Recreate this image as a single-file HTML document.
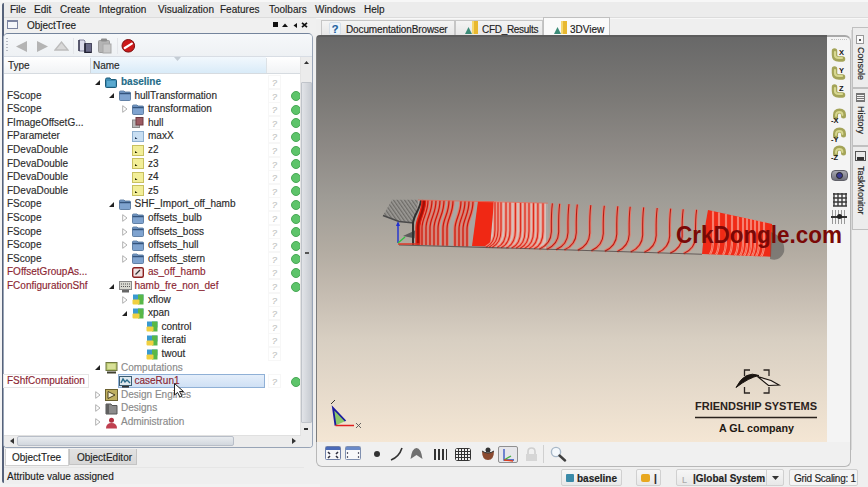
<!DOCTYPE html>
<html><head><meta charset="utf-8">
<style>
*{margin:0;padding:0;box-sizing:border-box}
html,body{width:868px;height:487px;overflow:hidden;background:#efefef;font-family:"Liberation Sans",sans-serif;font-size:10px;color:#222;-webkit-text-stroke:0.15px currentColor}
.a{position:absolute}
.mi{position:absolute;top:4px;font-size:10px;color:#1e1e1e;line-height:12px;white-space:nowrap}
/* left panel */
#lp{position:absolute;left:3px;top:33px;width:310px;height:415px;border:1px solid #98a4b6;border-top-color:#74849c;border-radius:5px 5px 4px 4px;box-shadow:inset 0 1px 0 #b4bfce;background:#fff;overflow:hidden}
#tb{position:absolute;left:0;top:0;width:309px;height:23px;background:linear-gradient(#f6f8fa,#eef1f4);border-bottom:1px solid #d8dde4}
#hdr{position:absolute;left:0;top:23px;width:298px;height:17px;background:linear-gradient(#ffffff,#f1f3f5);border-bottom:1px solid #d6dbe0}
#tree{position:absolute;left:0;top:0;width:868px;height:487px}
.tt{position:absolute;white-space:nowrap;line-height:14px;font-size:10px;color:#2a2a2a}
.tt.b{font-weight:bold;color:#246c88}
.tt.r{color:#8c2632}
.tt.g{color:#8a8a8a}
.ty{color:#2e2e2e}
.ic{position:absolute;line-height:0}
.ar{position:absolute;line-height:0}
.q{position:absolute;width:13px;height:14px;font-size:9px;line-height:14px;color:#c4c4c4;text-align:center;font-style:italic;border:1px solid #f7f7f7}
.dot{position:absolute;width:10px;height:10px;border-radius:5px;background:#5dc46a;border:1px solid #48a855}
.selbox{position:absolute;background:linear-gradient(#e4eefa,#cfe0f4);border:1px solid #8fb0d6}
.typebox{position:absolute;border:1px solid #e6e6e6;background:#fff}
/* right view */
#view{position:absolute;left:316px;top:35px;width:512px;height:407px;background:linear-gradient(#686868 0%,#7b7976 15%,#8e8a86 28%,#9f9c96 40%,#b3aca2 53%,#c6bdb2 64%,#d8cfc2 75%,#f4e6d4 100%);border-top:2px solid #5c5c5c;border-left:1px solid #7c7c7c;border-radius:4px 0 0 0}
#rtool{position:absolute;left:827px;top:35px;width:24px;height:407px;background:#f4f4f4;border-top:2px solid #a8a8a8;border-right:1px solid #b8b8b8;border-radius:0 6px 0 0}
#btool{position:absolute;left:316px;top:442px;width:535px;height:25px;background:#f0f0f0;border:1px solid #b8b8b8;border-top:none;border-radius:0 0 6px 6px}
.tab{position:absolute;height:16px;background:linear-gradient(#f4f4f4,#e6e6e6);border:1px solid #c6c6c6;border-bottom:none;font-size:10px;line-height:15px;color:#222;white-space:nowrap}
.stab{position:absolute;left:852px;width:16px;background:#ececec;border:1px solid #c0c0c0;border-right:none}
.vt{position:absolute;transform-origin:0 0;transform:rotate(90deg);white-space:nowrap;font-size:9px;line-height:11px;color:#222}
.sb{position:absolute;top:469px;height:17px;background:linear-gradient(#f6f6f6,#e8e8e8);border:1px solid #d0d0d0;border-radius:2px;font-size:10px;line-height:15px;white-space:nowrap}
</style></head><body>
<!-- window frame -->
<div class="a" style="left:0;top:0;width:868px;height:2px;background:#f7f7f7"></div>
<div class="a" style="left:0;top:0;width:2px;height:487px;background:#f4f4f4"></div>
<div class="a" style="left:2px;top:3px;width:2px;height:480px;background:#56627a;border-radius:3px 0 0 3px"></div>
<div class="a" style="left:0;top:484px;width:320px;height:3px;background:#f2f2f2"></div>

<!-- menu -->
<div class="a" style="left:4px;top:2px;width:864px;height:15px;background:#ececec"></div>
<div class="a" style="left:4px;top:17px;width:864px;height:1px;background:#dcdcdc"></div>
<div class="a" style="left:4px;top:18px;width:864px;height:1px;background:#f8f8f8"></div>
<div class="mi" style="left:10px">File</div>
<div class="mi" style="left:34px">Edit</div>
<div class="mi" style="left:60px">Create</div>
<div class="mi" style="left:99px">Integration</div>
<div class="mi" style="left:158px">Visualization</div>
<div class="mi" style="left:220px">Features</div>
<div class="mi" style="left:269px">Toolbars</div>
<div class="mi" style="left:315px">Windows</div>
<div class="mi" style="left:364px">Help</div>
<!-- ObjectTree title -->
<div class="a" style="left:4px;top:18px;width:312px;height:15px;background:#f0f0f0"></div>
<div class="a" style="left:7px;top:20px;width:11px;height:9px;border:1px solid #7c84a0;border-top-width:2px;background:#f4f6fa"></div>
<div class="mi" style="left:27px;top:20px">ObjectTree</div>
<div class="a" style="left:273px;top:22px;width:5px;height:5px;background:#111"></div>
<div class="a" style="left:282px;top:23px;line-height:0"><svg width="6" height="4"><path d="M0 4 L3 0.5 L6 4Z" fill="#111"/></svg></div>
<div class="a" style="left:292.5px;top:22.5px;line-height:0"><svg width="4" height="5"><path d="M4 0 V5 L0.5 2.5Z" fill="#111"/></svg></div>
<div class="a" style="left:301px;top:22px;line-height:0"><svg width="7" height="6"><path d="M1 0.8 L6 5.2 M6 0.8 L1 5.2" stroke="#111" stroke-width="1.7"/></svg></div>

<!-- left panel -->
<div id="lp">
 <div id="tb">
  <div class="a" style="left:2px;top:4px;width:2px;height:15px;background:repeating-linear-gradient(#b8bcc4 0 1px,transparent 1px 3px)"></div>
  <div class="a" style="left:12px;top:7px;line-height:0"><svg width="11" height="11"><path d="M11 0 V11 L0 5.5Z" fill="#b4b4b4"/></svg></div>
  <div class="a" style="left:33px;top:7px;line-height:0"><svg width="11" height="11"><path d="M0 0 V11 L11 5.5Z" fill="#b4b4b4"/></svg></div>
  <div class="a" style="left:50px;top:7px;line-height:0"><svg width="15" height="10"><path d="M1 9 L7.5 1 L14 9Z" fill="#d8d8d8" stroke="#bcbcbc" stroke-width="1.3"/></svg></div>
  <div class="a" style="left:69px;top:4px;width:1px;height:16px;background:#d6d9de"></div>
  <div class="a" style="left:74px;top:5px;line-height:0"><svg width="15" height="14"><path d="M1 1 H6 L7 2 V12 H1Z" fill="#dcdcec" stroke="#6a6a88" stroke-width="0.8"/><path d="M1 1 V12" stroke="#303048" stroke-width="1.4"/><rect x="7" y="4.5" width="6.5" height="9" fill="#6a6a88" stroke="#303048" stroke-width="0.8"/><path d="M7 4.5 V13.5 H13.5" stroke="#202030" stroke-width="1.5" fill="none"/></svg></div>
  <div class="a" style="left:69px;top:4px;width:1px;height:16px;background:#e4e6ea"></div>
  <div class="a" style="left:94px;top:4px;line-height:0"><svg width="14" height="16"><rect x="0.5" y="2.5" width="11" height="12" rx="1" fill="#b4b4b4" stroke="#9c9c9c"/><rect x="3" y="0.5" width="6" height="3" rx="1" fill="#8c8c8c"/><rect x="5" y="6" width="8" height="9" fill="#c8c8c8" stroke="#a8a8a8"/></svg></div>
  <div class="a" style="left:113px;top:4px;width:1px;height:16px;background:#e4e6ea"></div>
  <div class="a" style="left:117px;top:5px;line-height:0"><svg width="15" height="14"><circle cx="7.3" cy="6.8" r="6.3" fill="#cc1a1a" stroke="#7a1010" stroke-width="1"/><path d="M3.8 9 L10.8 4.6" stroke="#fff" stroke-width="2.3" stroke-linecap="round"/></svg></div>
 </div>
 <div id="hdr">
  <div class="a" style="left:86px;top:0;width:176px;height:16px;background:linear-gradient(#f2f8fd,#d9ebf8)"></div>
  <div class="a" style="left:86px;top:1px;width:1px;height:15px;background:#d0d6dc"></div>
  <div class="a" style="left:262px;top:1px;width:1px;height:15px;background:#dde2e6"></div>
  <div class="tt" style="left:4px;top:2px;line-height:13px">Type</div>
  <div class="tt" style="left:89px;top:2px;line-height:13px">Name</div>
  <div class="a" style="left:170px;top:0px;line-height:0"><svg width="7" height="4"><path d="M0 0 H7 L3.5 4Z" fill="#c4ccd4"/></svg></div>
 </div>
 <!-- vertical scrollbar -->
 <div class="a" style="left:296px;top:23px;width:12px;height:379px;background:#ececec;border-left:1px solid #e4e4e4"></div>
 <div class="a" style="left:300px;top:27px;line-height:0"><svg width="5" height="3"><path d="M0 3 L2.5 0 L5 3Z" fill="#333"/></svg></div>
 <div class="a" style="left:297px;top:48px;width:11px;height:341px;background:linear-gradient(90deg,#e2e4e8,#c8ccd2);border:1px solid #c0c4ca;border-radius:1px"><div class="a" style="left:3px;top:169px;width:4px;height:2px;background:#555"></div></div>
 <div class="a" style="left:300px;top:394px;width:4px;height:2px;background:#333"></div>
 <!-- horizontal scrollbar -->
 <div class="a" style="left:0;top:401px;width:309px;height:12px;background:#ececec;border-top:1px solid #e0e0e0"></div>
 <div class="a" style="left:6px;top:404px;line-height:0"><svg width="4" height="6"><path d="M4 0 V6 L0 3Z" fill="#333"/></svg></div>
 <div class="a" style="left:13px;top:402px;width:217px;height:10px;background:linear-gradient(#e8ebef,#d2d7de);border:1px solid #b8bec8;border-radius:2px"></div>
 <div class="a" style="left:288px;top:404px;line-height:0"><svg width="4" height="6"><path d="M0 0 V6 L4 3Z" fill="#333"/></svg></div>
 <div class="a" style="left:297px;top:401px;width:12px;height:12px;background:#ececec"></div>
</div>
<div id="tree" style="overflow:hidden;width:300px;height:436px">
<div class="ar" style="left:95.0px;top:79.5px"><svg width="5" height="5"><path d="M5 0 V5 H0Z" fill="#222"/></svg></div>
<div class="ic" style="left:105.0px;top:76.5px"><svg width="12" height="11" viewBox="0 0 12 11"><path d="M0.5 2.5 Q0.5 1 2 1 H5 L6 2.5 H10.5 Q11.5 2.5 11.5 3.5 V9.5 Q11.5 10.5 10.5 10.5 H1.5 Q0.5 10.5 0.5 9.5Z" fill="#3d8db5" stroke="#1d5a78" stroke-width="1"/><rect x="2" y="4" width="8.5" height="5.5" fill="#5aa9cf"/></svg></div>
<div class="tt b" style="left:121.0px;top:75.0px">baseline</div>
<div class="q" style="left:268px;top:75.0px">?</div>
<div class="ar" style="left:108.5px;top:93.1px"><svg width="5" height="5"><path d="M5 0 V5 H0Z" fill="#222"/></svg></div>
<div class="ic" style="left:118.5px;top:90.1px"><svg width="12" height="11" viewBox="0 0 12 11"><path d="M0.5 2 Q0.5 1 1.5 1 H5 L6 2 H10.5 Q11.5 2 11.5 3 V9.5 Q11.5 10.5 10.5 10.5 H1.5 Q0.5 10.5 0.5 9.5Z" fill="#7fa3cf" stroke="#4a6c96" stroke-width="0.8"/><path d="M0.6 3.5 H11.4" stroke="#34547c" stroke-width="1.5"/></svg></div>
<div class="tt " style="left:134.5px;top:88.6px">hullTransformation</div>
<div class="tt ty " style="left:7px;top:88.6px">FScope</div>
<div class="q" style="left:268px;top:88.6px">?</div>
<div class="dot" style="left:291px;top:91.1px"></div>
<div class="ar" style="left:122.0px;top:105.2px"><svg width="6" height="8"><path d="M0.7 0.7 L5 4 L0.7 7.3Z" fill="none" stroke="#b0b0b0" stroke-width="1"/></svg></div>
<div class="ic" style="left:132.0px;top:103.7px"><svg width="12" height="11" viewBox="0 0 12 11"><path d="M0.5 2 Q0.5 1 1.5 1 H5 L6 2 H10.5 Q11.5 2 11.5 3 V9.5 Q11.5 10.5 10.5 10.5 H1.5 Q0.5 10.5 0.5 9.5Z" fill="#7fa3cf" stroke="#4a6c96" stroke-width="0.8"/><path d="M0.6 3.5 H11.4" stroke="#34547c" stroke-width="1.5"/></svg></div>
<div class="tt " style="left:148.0px;top:102.2px">transformation</div>
<div class="tt ty " style="left:7px;top:102.2px">FScope</div>
<div class="q" style="left:268px;top:102.2px">?</div>
<div class="dot" style="left:291px;top:104.7px"></div>
<div class="ic" style="left:132.0px;top:117.3px"><svg width="12" height="11" viewBox="0 0 12 11"><rect x="0.5" y="3" width="7" height="7.5" fill="#b8b8b8" stroke="#8a8a8a"/><rect x="4" y="0.5" width="7" height="7.5" fill="#9c5a62" stroke="#6e3a40"/></svg></div>
<div class="tt " style="left:148.0px;top:115.8px">hull</div>
<div class="tt ty " style="left:7px;top:115.8px">FImageOffsetG...</div>
<div class="q" style="left:268px;top:115.8px">?</div>
<div class="dot" style="left:291px;top:118.3px"></div>
<div class="ic" style="left:132.0px;top:130.9px"><svg width="12" height="11" viewBox="0 0 12 11"><rect x="0.5" y="0.5" width="11" height="10" fill="#c8def2" stroke="#8fb0d0"/><path d="M3 6 L5.5 8 L3 8Z" fill="#1a3050"/></svg></div>
<div class="tt " style="left:148.0px;top:129.4px">maxX</div>
<div class="tt ty " style="left:7px;top:129.4px">FParameter</div>
<div class="q" style="left:268px;top:129.4px">?</div>
<div class="dot" style="left:291px;top:131.9px"></div>
<div class="ic" style="left:132.0px;top:144.5px"><svg width="12" height="11" viewBox="0 0 12 11"><rect x="0.5" y="0.5" width="11" height="10" fill="#f2ee98" stroke="#c8c060"/><path d="M3 6 L5.5 8 L3 8Z" fill="#202000"/></svg></div>
<div class="tt " style="left:148.0px;top:143.0px">z2</div>
<div class="tt ty " style="left:7px;top:143.0px">FDevaDouble</div>
<div class="q" style="left:268px;top:143.0px">?</div>
<div class="dot" style="left:291px;top:145.5px"></div>
<div class="ic" style="left:132.0px;top:158.1px"><svg width="12" height="11" viewBox="0 0 12 11"><rect x="0.5" y="0.5" width="11" height="10" fill="#f2ee98" stroke="#c8c060"/><path d="M3 6 L5.5 8 L3 8Z" fill="#202000"/></svg></div>
<div class="tt " style="left:148.0px;top:156.6px">z3</div>
<div class="tt ty " style="left:7px;top:156.6px">FDevaDouble</div>
<div class="q" style="left:268px;top:156.6px">?</div>
<div class="dot" style="left:291px;top:159.1px"></div>
<div class="ic" style="left:132.0px;top:171.7px"><svg width="12" height="11" viewBox="0 0 12 11"><rect x="0.5" y="0.5" width="11" height="10" fill="#f2ee98" stroke="#c8c060"/><path d="M3 6 L5.5 8 L3 8Z" fill="#202000"/></svg></div>
<div class="tt " style="left:148.0px;top:170.2px">z4</div>
<div class="tt ty " style="left:7px;top:170.2px">FDevaDouble</div>
<div class="q" style="left:268px;top:170.2px">?</div>
<div class="dot" style="left:291px;top:172.7px"></div>
<div class="ic" style="left:132.0px;top:185.3px"><svg width="12" height="11" viewBox="0 0 12 11"><rect x="0.5" y="0.5" width="11" height="10" fill="#f2ee98" stroke="#c8c060"/><path d="M3 6 L5.5 8 L3 8Z" fill="#202000"/></svg></div>
<div class="tt " style="left:148.0px;top:183.8px">z5</div>
<div class="tt ty " style="left:7px;top:183.8px">FDevaDouble</div>
<div class="q" style="left:268px;top:183.8px">?</div>
<div class="dot" style="left:291px;top:186.3px"></div>
<div class="ar" style="left:108.5px;top:201.9px"><svg width="5" height="5"><path d="M5 0 V5 H0Z" fill="#222"/></svg></div>
<div class="ic" style="left:118.5px;top:198.9px"><svg width="12" height="11" viewBox="0 0 12 11"><path d="M0.5 2 Q0.5 1 1.5 1 H5 L6 2 H10.5 Q11.5 2 11.5 3 V9.5 Q11.5 10.5 10.5 10.5 H1.5 Q0.5 10.5 0.5 9.5Z" fill="#7fa3cf" stroke="#4a6c96" stroke-width="0.8"/><path d="M0.6 3.5 H11.4" stroke="#34547c" stroke-width="1.5"/></svg></div>
<div class="tt " style="left:134.5px;top:197.4px">SHF_Import_off_hamb</div>
<div class="tt ty " style="left:7px;top:197.4px">FScope</div>
<div class="q" style="left:268px;top:197.4px">?</div>
<div class="dot" style="left:291px;top:199.9px"></div>
<div class="ar" style="left:122.0px;top:214.0px"><svg width="6" height="8"><path d="M0.7 0.7 L5 4 L0.7 7.3Z" fill="none" stroke="#b0b0b0" stroke-width="1"/></svg></div>
<div class="ic" style="left:132.0px;top:212.5px"><svg width="12" height="11" viewBox="0 0 12 11"><path d="M0.5 2 Q0.5 1 1.5 1 H5 L6 2 H10.5 Q11.5 2 11.5 3 V9.5 Q11.5 10.5 10.5 10.5 H1.5 Q0.5 10.5 0.5 9.5Z" fill="#7fa3cf" stroke="#4a6c96" stroke-width="0.8"/><path d="M0.6 3.5 H11.4" stroke="#34547c" stroke-width="1.5"/></svg></div>
<div class="tt " style="left:148.0px;top:211.0px">offsets_bulb</div>
<div class="tt ty " style="left:7px;top:211.0px">FScope</div>
<div class="q" style="left:268px;top:211.0px">?</div>
<div class="dot" style="left:291px;top:213.5px"></div>
<div class="ar" style="left:122.0px;top:227.6px"><svg width="6" height="8"><path d="M0.7 0.7 L5 4 L0.7 7.3Z" fill="none" stroke="#b0b0b0" stroke-width="1"/></svg></div>
<div class="ic" style="left:132.0px;top:226.1px"><svg width="12" height="11" viewBox="0 0 12 11"><path d="M0.5 2 Q0.5 1 1.5 1 H5 L6 2 H10.5 Q11.5 2 11.5 3 V9.5 Q11.5 10.5 10.5 10.5 H1.5 Q0.5 10.5 0.5 9.5Z" fill="#7fa3cf" stroke="#4a6c96" stroke-width="0.8"/><path d="M0.6 3.5 H11.4" stroke="#34547c" stroke-width="1.5"/></svg></div>
<div class="tt " style="left:148.0px;top:224.6px">offsets_boss</div>
<div class="tt ty " style="left:7px;top:224.6px">FScope</div>
<div class="q" style="left:268px;top:224.6px">?</div>
<div class="dot" style="left:291px;top:227.1px"></div>
<div class="ar" style="left:122.0px;top:241.2px"><svg width="6" height="8"><path d="M0.7 0.7 L5 4 L0.7 7.3Z" fill="none" stroke="#b0b0b0" stroke-width="1"/></svg></div>
<div class="ic" style="left:132.0px;top:239.7px"><svg width="12" height="11" viewBox="0 0 12 11"><path d="M0.5 2 Q0.5 1 1.5 1 H5 L6 2 H10.5 Q11.5 2 11.5 3 V9.5 Q11.5 10.5 10.5 10.5 H1.5 Q0.5 10.5 0.5 9.5Z" fill="#7fa3cf" stroke="#4a6c96" stroke-width="0.8"/><path d="M0.6 3.5 H11.4" stroke="#34547c" stroke-width="1.5"/></svg></div>
<div class="tt " style="left:148.0px;top:238.2px">offsets_hull</div>
<div class="tt ty " style="left:7px;top:238.2px">FScope</div>
<div class="q" style="left:268px;top:238.2px">?</div>
<div class="dot" style="left:291px;top:240.7px"></div>
<div class="ar" style="left:122.0px;top:254.8px"><svg width="6" height="8"><path d="M0.7 0.7 L5 4 L0.7 7.3Z" fill="none" stroke="#b0b0b0" stroke-width="1"/></svg></div>
<div class="ic" style="left:132.0px;top:253.3px"><svg width="12" height="11" viewBox="0 0 12 11"><path d="M0.5 2 Q0.5 1 1.5 1 H5 L6 2 H10.5 Q11.5 2 11.5 3 V9.5 Q11.5 10.5 10.5 10.5 H1.5 Q0.5 10.5 0.5 9.5Z" fill="#7fa3cf" stroke="#4a6c96" stroke-width="0.8"/><path d="M0.6 3.5 H11.4" stroke="#34547c" stroke-width="1.5"/></svg></div>
<div class="tt " style="left:148.0px;top:251.8px">offsets_stern</div>
<div class="tt ty " style="left:7px;top:251.8px">FScope</div>
<div class="q" style="left:268px;top:251.8px">?</div>
<div class="dot" style="left:291px;top:254.3px"></div>
<div class="ic" style="left:132.0px;top:266.9px"><svg width="12" height="11" viewBox="0 0 12 11"><rect x="0.7" y="0.7" width="10.6" height="9.6" rx="1.5" fill="#f0e0e0" stroke="#8b2020" stroke-width="1.4"/><path d="M3.5 7.5 L8 3" stroke="#333" stroke-width="1.3"/></svg></div>
<div class="tt r" style="left:148.0px;top:265.4px">as_off_hamb</div>
<div class="tt ty r" style="left:7px;top:265.4px">FOffsetGroupAs...</div>
<div class="q" style="left:268px;top:265.4px">?</div>
<div class="dot" style="left:291px;top:267.9px"></div>
<div class="ar" style="left:108.5px;top:283.5px"><svg width="5" height="5"><path d="M5 0 V5 H0Z" fill="#222"/></svg></div>
<div class="ic" style="left:118.5px;top:280.5px"><svg width="13" height="12" viewBox="0 0 13 12"><rect x="0.5" y="0.5" width="12" height="8" fill="#d8d8d0" stroke="#888"/><path d="M2 3 H11 M2 5.5 H11" stroke="#555" stroke-width="1" stroke-dasharray="1 1"/><rect x="3" y="9" width="7" height="2.5" fill="#666"/></svg></div>
<div class="tt r" style="left:134.5px;top:279.0px">hamb_fre_non_def</div>
<div class="tt ty r" style="left:7px;top:279.0px">FConfigurationShf</div>
<div class="q" style="left:268px;top:279.0px">?</div>
<div class="dot" style="left:291px;top:281.5px"></div>
<div class="ar" style="left:122.0px;top:295.6px"><svg width="6" height="8"><path d="M0.7 0.7 L5 4 L0.7 7.3Z" fill="none" stroke="#b0b0b0" stroke-width="1"/></svg></div>
<div class="ic" style="left:132.0px;top:294.1px"><svg width="12" height="11" viewBox="0 0 12 11"><rect x="1" y="0.5" width="10.5" height="6" fill="#3a9ad0"/><rect x="6" y="0.5" width="5.5" height="10" fill="#58b848"/><rect x="0.5" y="5.5" width="7" height="5" rx="1" fill="#f0d040"/></svg></div>
<div class="tt " style="left:148.0px;top:292.6px">xflow</div>
<div class="q" style="left:268px;top:292.6px">?</div>
<div class="ar" style="left:122.0px;top:310.7px"><svg width="5" height="5"><path d="M5 0 V5 H0Z" fill="#222"/></svg></div>
<div class="ic" style="left:132.0px;top:307.7px"><svg width="12" height="11" viewBox="0 0 12 11"><rect x="1" y="0.5" width="10.5" height="6" fill="#3a9ad0"/><rect x="6" y="0.5" width="5.5" height="10" fill="#58b848"/><rect x="0.5" y="5.5" width="7" height="5" rx="1" fill="#f0d040"/></svg></div>
<div class="tt " style="left:148.0px;top:306.2px">xpan</div>
<div class="q" style="left:268px;top:306.2px">?</div>
<div class="ic" style="left:145.5px;top:321.3px"><svg width="12" height="11" viewBox="0 0 12 11"><rect x="1" y="0.5" width="10.5" height="6" fill="#3a9ad0"/><rect x="6" y="0.5" width="5.5" height="10" fill="#58b848"/><rect x="0.5" y="5.5" width="7" height="5" rx="1" fill="#f0d040"/></svg></div>
<div class="tt " style="left:161.5px;top:319.8px">control</div>
<div class="q" style="left:268px;top:319.8px">?</div>
<div class="ic" style="left:145.5px;top:334.9px"><svg width="12" height="11" viewBox="0 0 12 11"><rect x="1" y="0.5" width="10.5" height="6" fill="#3a9ad0"/><rect x="6" y="0.5" width="5.5" height="10" fill="#58b848"/><rect x="0.5" y="5.5" width="7" height="5" rx="1" fill="#f0d040"/></svg></div>
<div class="tt " style="left:161.5px;top:333.4px">iterati</div>
<div class="q" style="left:268px;top:333.4px">?</div>
<div class="ic" style="left:145.5px;top:348.5px"><svg width="12" height="11" viewBox="0 0 12 11"><rect x="1" y="0.5" width="10.5" height="6" fill="#3a9ad0"/><rect x="6" y="0.5" width="5.5" height="10" fill="#58b848"/><rect x="0.5" y="5.5" width="7" height="5" rx="1" fill="#f0d040"/></svg></div>
<div class="tt " style="left:161.5px;top:347.0px">twout</div>
<div class="q" style="left:268px;top:347.0px">?</div>
<div class="ar" style="left:95.0px;top:365.1px"><svg width="5" height="5"><path d="M5 0 V5 H0Z" fill="#222"/></svg></div>
<div class="ic" style="left:105.0px;top:362.1px"><svg width="13" height="12" viewBox="0 0 13 12"><rect x="1" y="0.5" width="11" height="8" fill="#b8c870" stroke="#707840"/><rect x="2.5" y="2" width="8" height="5" fill="#d8e098"/><rect x="2" y="9.5" width="9" height="2" fill="#404030"/></svg></div>
<div class="tt g" style="left:121.0px;top:360.6px">Computations</div>
<div class="selbox" style="left:118px;top:373.7px;width:147px;height:14px"></div>
<div class="typebox" style="left:3px;top:373.7px;width:86px;height:14px"></div>
<div class="ic" style="left:118.5px;top:375.7px"><svg width="13" height="12" viewBox="0 0 13 12"><rect x="0.5" y="0.5" width="12" height="9" fill="#dfe8ee" stroke="#3c5c70"/><path d="M2 7 L4 3 L6 6 L8 4 L11 7" stroke="#2a6a8a" stroke-width="1.4" fill="none"/><rect x="3" y="10" width="7" height="1.6" fill="#333"/></svg></div>
<div class="tt r sel" style="left:134.5px;top:374.2px">caseRun1</div>
<div class="tt ty r box" style="left:7px;top:374.2px">FShfComputation</div>
<div class="q" style="left:268px;top:374.2px">?</div>
<div class="dot" style="left:291px;top:376.7px"></div>
<div class="ar" style="left:95.0px;top:390.8px"><svg width="6" height="8"><path d="M0.7 0.7 L5 4 L0.7 7.3Z" fill="none" stroke="#b0b0b0" stroke-width="1"/></svg></div>
<div class="ic" style="left:105.0px;top:389.3px"><svg width="13" height="12" viewBox="0 0 13 12"><rect x="0.5" y="0.5" width="12" height="11" fill="#c0b060" stroke="#6a6030"/><path d="M3 2.5 L10 6 L3 9.5Z" fill="#f6f0d0" stroke="#4a4020"/></svg></div>
<div class="tt g" style="left:121.0px;top:387.8px">Design Engines</div>
<div class="ar" style="left:95.0px;top:404.4px"><svg width="6" height="8"><path d="M0.7 0.7 L5 4 L0.7 7.3Z" fill="none" stroke="#b0b0b0" stroke-width="1"/></svg></div>
<div class="ic" style="left:105.0px;top:402.9px"><svg width="13" height="12" viewBox="0 0 13 12"><path d="M1 1 H6 L7 2.5 H12 V11 H1Z" fill="#8c8c8c" stroke="#555"/><rect x="1" y="1" width="3" height="10" fill="#606060"/></svg></div>
<div class="tt g" style="left:121.0px;top:401.4px">Designs</div>
<div class="ar" style="left:95.0px;top:418.0px"><svg width="6" height="8"><path d="M0.7 0.7 L5 4 L0.7 7.3Z" fill="none" stroke="#b0b0b0" stroke-width="1"/></svg></div>
<div class="ic" style="left:105.0px;top:416.5px"><svg width="13" height="12" viewBox="0 0 13 12"><circle cx="6.5" cy="3.2" r="2.5" fill="#b03040"/><path d="M1 11.5 Q1 6 6.5 6 Q12 6 12 11.5Z" fill="#c04050"/></svg></div>
<div class="tt g" style="left:121.0px;top:415.0px">Administration</div>
<!-- cursor -->
<div class="a" style="left:174px;top:383px;line-height:0"><svg width="11" height="15"><path d="M0.5 0.5 V12 L3.5 9.5 L6 14 L8 13 L5.5 8.5 H9.5Z" fill="#fff" stroke="#222" stroke-width="1"/></svg></div>
</div>
<!-- bottom tabs -->
<div class="a" style="left:5px;top:449px;width:64px;height:17px;background:#fff;border:1px solid #d0d0d0;border-top:none"></div>
<div class="mi" style="left:12px;top:452px">ObjectTree</div>
<div class="a" style="left:69px;top:449px;width:68px;height:16px;background:linear-gradient(#e2e2e2,#d8d8d8);border:1px solid #c4c4c4;border-top:none"></div>
<div class="mi" style="left:77px;top:452px">ObjectEditor</div>
<div class="a" style="left:4px;top:467px;width:300px;height:1px;background:#e6e6e6"></div>
<div class="mi" style="left:7px;top:471px">Attribute value assigned</div>

<!-- right tabs -->
<div class="tab" style="left:321px;top:20px;width:134px"><span class="a" style="left:7px;top:1px;width:12px;height:13px;background:#eef4fa;border:1px solid #d6e0ea;border-radius:2px;font-weight:bold;color:#2060a0;font-size:11px;line-height:12px;text-align:center">?</span><span class="a" style="left:24px;top:1px;letter-spacing:-0.12px">DocumentationBrowser</span></div>
<div class="tab" style="left:455px;top:20px;width:88px"><span class="a" style="left:9px;top:0px;line-height:0"><svg width="14" height="13"><path d="M0 13 L3.5 6 L7 13Z" fill="#3c8c78"/><rect x="7" y="0" width="6" height="13" fill="#e8b830"/><rect x="7" y="0" width="2" height="13" fill="#f6d870"/></svg></span><span class="a" style="left:26px;top:1px;letter-spacing:-0.3px">CFD_Results</span></div>
<div class="tab" style="left:543px;top:17px;width:67px;height:20px;background:#fafafa;border-color:#c0c0c0"><span class="a" style="left:10px;top:3px;line-height:0"><svg width="14" height="13"><path d="M0 13 L3.5 6 L7 13Z" fill="#3c8c78"/><rect x="7" y="0" width="6" height="13" fill="#e8b830"/><rect x="7" y="0" width="2" height="13" fill="#f6d870"/></svg></span><span class="a" style="left:26px;top:4px">3DView</span></div>

<!-- 3D view -->
<div id="view">
 
</div>
<div id="rtool">
 <div class="a" style="left:4px;top:2px;width:16px;height:1px;border-top:1px dotted #c0c0c0"></div>
 <div class="a" style="left:3px;top:9px;line-height:0"><svg width="22" height="18"><path d="M4.5 5 V9 Q4.5 13 9 13 H12.5" stroke="#a4a458" stroke-width="5.5" fill="none" stroke-linecap="round"/><path d="M5 6 V9 Q5 12 9 12 H12" stroke="#d8d890" stroke-width="2.2" fill="none" stroke-linecap="round"/><text x="9" y="8.5" font-family="Liberation Sans" font-weight="bold" font-size="7.5" fill="#151515">X</text></svg></div>
<div class="a" style="left:3px;top:27px;line-height:0"><svg width="22" height="18"><path d="M4.5 5 V9 Q4.5 13 9 13 H12.5" stroke="#a4a458" stroke-width="5.5" fill="none" stroke-linecap="round"/><path d="M5 6 V9 Q5 12 9 12 H12" stroke="#d8d890" stroke-width="2.2" fill="none" stroke-linecap="round"/><text x="9" y="8.5" font-family="Liberation Sans" font-weight="bold" font-size="7.5" fill="#151515">Y</text></svg></div>
<div class="a" style="left:3px;top:45px;line-height:0"><svg width="22" height="18"><path d="M4.5 5 V9 Q4.5 13 9 13 H12.5" stroke="#a4a458" stroke-width="5.5" fill="none" stroke-linecap="round"/><path d="M5 6 V9 Q5 12 9 12 H12" stroke="#d8d890" stroke-width="2.2" fill="none" stroke-linecap="round"/><text x="9" y="8.5" font-family="Liberation Sans" font-weight="bold" font-size="7.5" fill="#151515">Z</text></svg></div>
<div class="a" style="left:2px;top:70px;line-height:0"><svg width="22" height="20"><path d="M6.5 10 V8 Q6.5 4 10.5 4 Q14.5 4 14.5 8 V9" stroke="#a4a458" stroke-width="5" fill="none" stroke-linecap="round"/><path d="M7 9 V8 Q7 5 10.5 5 Q13.5 5 13.5 8" stroke="#d8d890" stroke-width="1.8" fill="none" stroke-linecap="round"/><text x="2" y="16" font-family="Liberation Sans" font-weight="bold" font-size="7.5" fill="#151515">-X</text></svg></div>
<div class="a" style="left:2px;top:89px;line-height:0"><svg width="22" height="20"><path d="M6.5 10 V8 Q6.5 4 10.5 4 Q14.5 4 14.5 8 V9" stroke="#a4a458" stroke-width="5" fill="none" stroke-linecap="round"/><path d="M7 9 V8 Q7 5 10.5 5 Q13.5 5 13.5 8" stroke="#d8d890" stroke-width="1.8" fill="none" stroke-linecap="round"/><text x="2" y="16" font-family="Liberation Sans" font-weight="bold" font-size="7.5" fill="#151515">-Y</text></svg></div>
<div class="a" style="left:2px;top:107px;line-height:0"><svg width="22" height="20"><path d="M6.5 10 V8 Q6.5 4 10.5 4 Q14.5 4 14.5 8 V9" stroke="#a4a458" stroke-width="5" fill="none" stroke-linecap="round"/><path d="M7 9 V8 Q7 5 10.5 5 Q13.5 5 13.5 8" stroke="#d8d890" stroke-width="1.8" fill="none" stroke-linecap="round"/><text x="2" y="16" font-family="Liberation Sans" font-weight="bold" font-size="7.5" fill="#151515">-Z</text></svg></div>
<div class="a" style="left:4px;top:133px;width:17px;height:11px;border-radius:4px;background:linear-gradient(#a8a8b0,#70707c);border:1px solid #606068"><div class="a" style="left:4px;top:1px;width:7px;height:7px;border-radius:4px;background:#3a3a90;border:1px solid #222"></div></div>
<div class="a" style="left:5px;top:155px;line-height:0"><svg width="15" height="15"><path d="M2 1 V14 M6 1 V14 M10 1 V14 M14 1 V14 M1 2 H15 M1 6 H15 M1 10 H15 M1 14 H15" stroke="#3a3a3a" stroke-width="1.4"/></svg></div>
<div class="a" style="left:5px;top:173px;width:15px;height:14px;background:repeating-linear-gradient(90deg,#999 0 1px,transparent 1px 3px)"></div><div class="a" style="left:4px;top:179px;width:16px;height:1.5px;background:#333"></div><div class="a" style="left:10px;top:177px;width:5px;height:5px;border-radius:3px;background:#222"></div>
</div>
<div id="btool">
 <div class="a" style="left:8px;top:4px;line-height:0"><svg width="16" height="14"><rect x="0.5" y="0.5" width="15" height="13" rx="1" fill="#f8f8fa" stroke="#7080a8"/><rect x="1" y="1" width="14" height="3" fill="#4a6ab8"/><path d="M3 6 L5 8 M13 6 L11 8 M3 12 L5 10 M13 12 L11 10" stroke="#303040" stroke-width="1.6"/></svg></div>
<div class="a" style="left:28px;top:4px;line-height:0"><svg width="16" height="14"><rect x="0.5" y="0.5" width="15" height="13" rx="1" fill="#f8f8fa" stroke="#8090b0"/><rect x="1" y="1" width="14" height="3" fill="#6a8ac8"/><path d="M2.5 6 V8 M13.5 6 V8 M2.5 10 V12 M13.5 10 V12" stroke="#606070" stroke-width="1.2"/></svg></div>
<div class="a" style="left:56.5px;top:9px;width:6px;height:6px;border-radius:3px;background:#333"></div>
<div class="a" style="left:73px;top:5px;line-height:0"><svg width="14" height="14"><path d="M1 13 Q9 10 12 1" stroke="#333" stroke-width="1.6" fill="none"/></svg></div>
<div class="a" style="left:93px;top:5px;line-height:0"><svg width="13" height="13"><path d="M0.5 12 Q2 1 6.5 1 Q11 1 12.5 12 L6.5 8Z" fill="#707070"/></svg></div>
<div class="a" style="left:117px;top:7px;width:13px;height:11px;background:repeating-linear-gradient(90deg,#333 0 2px,transparent 2px 4px)"></div>
<div class="a" style="left:138px;top:6px;width:16px;height:13px;background:repeating-linear-gradient(90deg,#333 0 1.5px,transparent 1.5px 3px),repeating-linear-gradient(#333 0 1px,transparent 1px 3px);border-radius:3px"></div>
<div class="a" style="left:164px;top:5px;line-height:0"><svg width="14" height="14"><path d="M1 4 Q1 13 7 13 Q13 13 13 4Z" fill="#8a4a30"/><path d="M1 4 Q7 8 13 4" fill="#fff" stroke="#333"/><ellipse cx="7" cy="3" rx="2.5" ry="2.5" fill="#333"/></svg></div>
<div class="a" style="left:181px;top:4px;width:20px;height:17px;border:1px solid #909090;background:#e6e6ea;border-radius:2px"><svg class="a" style="left:2px;top:1px" width="14" height="14"><path d="M3 1 V12 H13" stroke="#3050c0" stroke-width="1.3" fill="none"/><path d="M3 12 L10 8" stroke="#40b040" stroke-width="1.3"/><path d="M3 12 L12 13" stroke="#e04020" stroke-width="1.3"/></svg></div>
<div class="a" style="left:208px;top:5px;line-height:0"><svg width="13" height="14"><path d="M3 7 V4.5 Q3 1 6.5 1 Q10 1 10 4.5 V7" stroke="#cfcfcf" stroke-width="1.6" fill="none"/><rect x="1" y="7" width="11" height="7" fill="#d6d6d6"/></svg></div>
<div class="a" style="left:226px;top:3px;width:1px;height:18px;background:#d0d0d0"></div>
<div class="a" style="left:233px;top:4px;line-height:0"><svg width="17" height="16"><circle cx="6" cy="6" r="4.6" fill="#f4f8fc" stroke="#a8b8c8" stroke-width="1.4"/><path d="M9.5 9.5 L15 14.5" stroke="#404040" stroke-width="2.4" stroke-linecap="round"/></svg></div>
</div>
<!-- side tabs -->
<div class="a" style="left:851px;top:30px;width:1px;height:420px;background:#d8d8d8"></div>
<div class="stab" style="top:27px;height:61px"><div class="a" style="left:3px;top:7px;width:8px;height:9px;border:1px solid #999;background:#fafafa"><div class="a" style="left:2px;top:3px;width:2px;height:2px;background:#555"></div></div><div class="vt" style="left:13px;top:19px">Console</div></div>
<div class="stab" style="top:88px;height:58px"><div class="a" style="left:3px;top:4px;width:9px;height:9px;background:repeating-linear-gradient(#777 0 1px,#f4f4f4 1px 2px);border:1px solid #777"></div><div class="vt" style="left:13px;top:17px">History</div></div>
<div class="stab" style="top:146px;height:84px"><div class="a" style="left:2px;top:4px;width:11px;height:10px;border:1px solid #555;background:#e8e8e8"><div class="a" style="left:1px;top:5px;width:7px;height:3px;background:#333"></div></div><div class="vt" style="left:13px;top:19px">TaskMonitor</div></div>
<!-- status bar right -->
<div class="sb" style="left:561px;width:61px"><span class="a" style="left:4px;top:4px;width:8px;height:8px;background:#3a8aa8;border-radius:1px"></span><span class="a" style="left:15px;top:1px;font-weight:bold;color:#222">baseline</span></div>
<div class="sb" style="left:636px;width:25px"><span class="a" style="left:4px;top:4px;width:9px;height:8px;background:#e8a820;border-radius:2px"></span><span class="a" style="left:17px;top:1px;font-weight:bold">|</span></div>
<div class="sb" style="left:676px;width:108px"><span class="a" style="left:5px;top:3px;color:#aaa;font-size:9px">L</span><span class="a" style="left:16px;top:1px;font-weight:bold;color:#222">|Global System</span><span class="a" style="left:89px;top:0;width:18px;height:15px;border-left:1px solid #d0d0d0"></span><span class="a" style="left:95px;top:6px;line-height:0"><svg width="7" height="4"><path d="M0 0 H7 L3.5 4Z" fill="#333"/></svg></span></div>
<div class="sb" style="left:789px;width:69px;background:#f4f4f4"><span class="a" style="left:4px;top:1px;letter-spacing:-0.25px">Grid Scaling: 1</span></div>
<svg class="a" style="left:0;top:0" width="868" height="487" viewBox="0 0 868 487">
<defs><pattern id="hat" width="3" height="3" patternUnits="userSpaceOnUse" patternTransform="rotate(-35)"><rect width="3" height="3" fill="#9c9a96"/><rect width="1.3" height="3" fill="#6e6c68"/></pattern></defs>
<path d="M383 215.5 L392 199.8 L424 199.8 Q417 209 414 223 L399 221 Z" fill="url(#hat)"/>
<path d="M383 215.5 L399 221.5 L414 223" stroke="#4a4a4a" stroke-width="1.6" fill="none"/>
<path d="M403 236 L416 230 L418 239 Z" fill="#5a5a5a"/>
<path d="M418 200 L548 203.2 L548 249 L414 244.7 Z" fill="#aaa6a2"/>
<path d="M494 201.5 L546 203.2 L546 249 L490 247.5 Z" fill="#d8c0ba"/>
<path d="M478 201 L494 201.5 L490 246.5 L472 246 Z" fill="#f02814"/>
<path d="M708 210 L772 224 L771 256.7 L702 254 Q704 230 708 210 Z" fill="#f02a16"/>
<path d="M771 232 Q786 238 784 252 Q780 262 770 259 Z" fill="#5a5856" opacity="0.6"/>
<path d="M421 200 C420 210 414 214 413 223 L413 245" stroke="#303030" stroke-width="2" fill="none"/>
<path d="M424.0 199.9 C424.0 213.4 418.0 217.9 418.0 227.8 L418.0 244.8" fill="none" stroke="#e82010" stroke-width="5.2"/><path d="M424.0 199.9 C424.0 213.4 418.0 217.9 418.0 227.8 L418.0 244.8" fill="none" stroke="#a01008" stroke-width="2.4"/>
<path d="M428.0 200.0 C428.0 213.5 422.0 218.0 422.0 227.9 L422.0 245.0" fill="none" stroke="#f07060" stroke-width="3.2"/><path d="M428.0 200.0 C428.0 213.5 422.0 218.0 422.0 227.9 L422.0 245.0" fill="none" stroke="#c01c10" stroke-width="1.2"/>
<path d="M432.0 200.1 C432.0 213.6 426.0 218.1 426.0 228.0 L426.0 245.1" fill="none" stroke="#f07060" stroke-width="3.2"/><path d="M432.0 200.1 C432.0 213.6 426.0 218.1 426.0 228.0 L426.0 245.1" fill="none" stroke="#c01c10" stroke-width="1.2"/>
<path d="M436.0 200.2 C436.0 213.7 430.0 218.2 430.0 228.1 L430.0 245.2" fill="none" stroke="#f07060" stroke-width="3.2"/><path d="M436.0 200.2 C436.0 213.7 430.0 218.2 430.0 228.1 L430.0 245.2" fill="none" stroke="#c01c10" stroke-width="1.2"/>
<path d="M440.0 200.3 C440.0 213.8 434.0 218.3 434.0 228.3 L434.0 245.4" fill="none" stroke="#f07060" stroke-width="3.2"/><path d="M440.0 200.3 C440.0 213.8 434.0 218.3 434.0 228.3 L434.0 245.4" fill="none" stroke="#c01c10" stroke-width="1.2"/>
<path d="M444.0 200.4 C444.0 214.0 438.0 218.5 438.0 228.4 L438.0 245.5" fill="none" stroke="#f07060" stroke-width="3.2"/><path d="M444.0 200.4 C444.0 214.0 438.0 218.5 438.0 228.4 L438.0 245.5" fill="none" stroke="#c01c10" stroke-width="1.2"/>
<path d="M449.0 200.6 C449.0 214.1 443.0 218.6 443.0 228.5 L443.0 245.7" fill="none" stroke="#f07060" stroke-width="3.2"/><path d="M449.0 200.6 C449.0 214.1 443.0 218.6 443.0 228.5 L443.0 245.7" fill="none" stroke="#c01c10" stroke-width="1.2"/>
<path d="M453.0 200.7 C453.0 214.2 447.0 218.7 447.0 228.7 L447.0 245.8" fill="none" stroke="#f07060" stroke-width="3.2"/><path d="M453.0 200.7 C453.0 214.2 447.0 218.7 447.0 228.7 L447.0 245.8" fill="none" stroke="#c01c10" stroke-width="1.2"/>
<path d="M461.0 200.9 C461.0 214.4 455.0 219.0 455.0 228.9 L455.0 246.1" fill="none" stroke="#f07060" stroke-width="3.2"/><path d="M461.0 200.9 C461.0 214.4 455.0 219.0 455.0 228.9 L455.0 246.1" fill="none" stroke="#c01c10" stroke-width="1.2"/>
<path d="M465.0 201.0 C465.0 214.6 459.0 219.1 459.0 229.0 L459.0 246.2" fill="none" stroke="#f07060" stroke-width="3.2"/><path d="M465.0 201.0 C465.0 214.6 459.0 219.1 459.0 229.0 L459.0 246.2" fill="none" stroke="#c01c10" stroke-width="1.2"/>
<path d="M469.0 201.1 C469.0 214.7 463.0 219.2 463.0 229.2 L463.0 246.3" fill="none" stroke="#f07060" stroke-width="3.2"/><path d="M469.0 201.1 C469.0 214.7 463.0 219.2 463.0 229.2 L463.0 246.3" fill="none" stroke="#c01c10" stroke-width="1.2"/>
<path d="M473.0 201.2 C473.0 214.8 467.0 219.3 467.0 229.3 L467.0 246.5" fill="none" stroke="#f07060" stroke-width="3.2"/><path d="M473.0 201.2 C473.0 214.8 467.0 219.3 467.0 229.3 L467.0 246.5" fill="none" stroke="#c01c10" stroke-width="1.2"/>
<path d="M495.0 201.8 L495.0 230.0 Q495.0 243.2 486.0 247.2" fill="none" stroke="#f08a7a" stroke-width="3.0"/><path d="M495.0 201.8 L495.0 230.0 Q495.0 243.2 486.0 247.2" fill="none" stroke="#d8281a" stroke-width="1.08"/>
<path d="M498.0 201.9 L498.0 230.0 Q498.0 243.3 489.0 247.3" fill="none" stroke="#f08a7a" stroke-width="3.0"/><path d="M498.0 201.9 L498.0 230.0 Q498.0 243.3 489.0 247.3" fill="none" stroke="#d8281a" stroke-width="1.08"/>
<path d="M501.0 202.0 L501.0 230.1 Q501.0 243.4 492.0 247.4" fill="none" stroke="#f08a7a" stroke-width="3.0"/><path d="M501.0 202.0 L501.0 230.1 Q501.0 243.4 492.0 247.4" fill="none" stroke="#d8281a" stroke-width="1.08"/>
<path d="M506.0 202.1 L506.0 230.3 Q506.0 243.6 497.0 247.6" fill="none" stroke="#f08a7a" stroke-width="3.0"/><path d="M506.0 202.1 L506.0 230.3 Q506.0 243.6 497.0 247.6" fill="none" stroke="#d8281a" stroke-width="1.08"/>
<path d="M510.0 202.2 L510.0 230.4 Q510.0 243.7 501.0 247.7" fill="none" stroke="#f08a7a" stroke-width="3.0"/><path d="M510.0 202.2 L510.0 230.4 Q510.0 243.7 501.0 247.7" fill="none" stroke="#d8281a" stroke-width="1.08"/>
<path d="M515.4 202.3 L515.4 230.6 Q515.4 243.9 506.4 247.9" fill="none" stroke="#f08a7a" stroke-width="3.0"/><path d="M515.4 202.3 L515.4 230.6 Q515.4 243.9 506.4 247.9" fill="none" stroke="#d8281a" stroke-width="1.08"/>
<path d="M520.6 202.5 L520.6 230.7 Q520.6 244.1 511.6 248.1" fill="none" stroke="#f08a7a" stroke-width="3.0"/><path d="M520.6 202.5 L520.6 230.7 Q520.6 244.1 511.6 248.1" fill="none" stroke="#d8281a" stroke-width="1.08"/>
<path d="M525.0 202.6 L525.0 230.9 Q525.0 244.2 516.0 248.2" fill="none" stroke="#f08a7a" stroke-width="3.0"/><path d="M525.0 202.6 L525.0 230.9 Q525.0 244.2 516.0 248.2" fill="none" stroke="#d8281a" stroke-width="1.08"/>
<path d="M529.0 202.7 L529.0 231.0 Q529.0 244.4 520.0 248.4" fill="none" stroke="#f08a7a" stroke-width="3.0"/><path d="M529.0 202.7 L529.0 231.0 Q529.0 244.4 520.0 248.4" fill="none" stroke="#d8281a" stroke-width="1.08"/>
<path d="M533.5 202.8 L533.5 231.1 Q533.5 244.5 524.5 248.5" fill="none" stroke="#f08a7a" stroke-width="3.0"/><path d="M533.5 202.8 L533.5 231.1 Q533.5 244.5 524.5 248.5" fill="none" stroke="#d8281a" stroke-width="1.08"/>
<path d="M537.9 202.9 L537.9 231.3 Q537.9 244.7 528.9 248.7" fill="none" stroke="#f08a7a" stroke-width="3.0"/><path d="M537.9 202.9 L537.9 231.3 Q537.9 244.7 528.9 248.7" fill="none" stroke="#d8281a" stroke-width="1.08"/>
<path d="M543.0 203.1 L543.0 231.4 Q543.0 244.8 534.0 248.8" fill="none" stroke="#f08a7a" stroke-width="3.0"/><path d="M543.0 203.1 L543.0 231.4 Q543.0 244.8 534.0 248.8" fill="none" stroke="#d8281a" stroke-width="1.08"/>
<path d="M552.4 203.4 C550.9 214.8 551.4 226.3 551.4 231.8 Q550.9 244.1 539.4 249.1" fill="none" stroke="#ea7868" stroke-width="2.9"/><path d="M552.4 203.4 C550.9 214.8 551.4 226.3 551.4 231.8 Q550.9 244.1 539.4 249.1" fill="none" stroke="#b01c14" stroke-width="1.02"/>
<path d="M559.7 203.7 C558.2 215.1 558.7 226.5 558.7 232.0 Q558.2 244.4 546.7 249.4" fill="none" stroke="#ea7868" stroke-width="2.9"/><path d="M559.7 203.7 C558.2 215.1 558.7 226.5 558.7 232.0 Q558.2 244.4 546.7 249.4" fill="none" stroke="#b01c14" stroke-width="1.02"/>
<path d="M569.0 204.1 C567.5 215.5 568.0 226.9 568.0 232.4 Q567.5 244.7 556.0 249.7" fill="none" stroke="#ea7868" stroke-width="2.9"/><path d="M569.0 204.1 C567.5 215.5 568.0 226.9 568.0 232.4 Q567.5 244.7 556.0 249.7" fill="none" stroke="#b01c14" stroke-width="1.02"/>
<path d="M577.3 204.5 C575.8 215.9 576.3 227.2 576.3 232.7 Q575.8 244.9 564.3 249.9" fill="none" stroke="#ea7868" stroke-width="2.9"/><path d="M577.3 204.5 C575.8 215.9 576.3 227.2 576.3 232.7 Q575.8 244.9 564.3 249.9" fill="none" stroke="#b01c14" stroke-width="1.02"/>
<path d="M590.8 205.1 C589.3 216.4 589.8 227.7 589.8 233.1 Q589.3 245.3 577.8 250.3" fill="none" stroke="#ea7868" stroke-width="2.9"/><path d="M590.8 205.1 C589.3 216.4 589.8 227.7 589.8 233.1 Q589.3 245.3 577.8 250.3" fill="none" stroke="#b01c14" stroke-width="1.02"/>
<path d="M604.3 205.7 C602.8 217.0 603.3 228.2 603.3 233.6 Q602.8 245.8 591.3 250.8" fill="none" stroke="#ea7868" stroke-width="2.9"/><path d="M604.3 205.7 C602.8 217.0 603.3 228.2 603.3 233.6 Q602.8 245.8 591.3 250.8" fill="none" stroke="#b01c14" stroke-width="1.02"/>
<path d="M617.8 206.3 C616.3 217.5 616.8 228.7 616.8 234.1 Q616.3 246.2 604.8 251.2" fill="none" stroke="#ea7868" stroke-width="2.9"/><path d="M617.8 206.3 C616.3 217.5 616.8 228.7 616.8 234.1 Q616.3 246.2 604.8 251.2" fill="none" stroke="#b01c14" stroke-width="1.02"/>
<path d="M630.2 206.8 C628.7 218.0 629.2 229.2 629.2 234.6 Q628.7 246.6 617.2 251.6" fill="none" stroke="#ea7868" stroke-width="2.9"/><path d="M630.2 206.8 C628.7 218.0 629.2 229.2 629.2 234.6 Q628.7 246.6 617.2 251.6" fill="none" stroke="#b01c14" stroke-width="1.02"/>
<path d="M643.7 207.4 C642.2 218.6 642.7 229.7 642.7 235.1 Q642.2 247.0 630.7 252.0" fill="none" stroke="#ea7868" stroke-width="2.9"/><path d="M643.7 207.4 C642.2 218.6 642.7 229.7 642.7 235.1 Q642.2 247.0 630.7 252.0" fill="none" stroke="#b01c14" stroke-width="1.02"/>
<path d="M657.2 208.0 C655.7 219.1 656.2 230.2 656.2 235.6 Q655.7 247.4 644.2 252.4" fill="none" stroke="#ea7868" stroke-width="2.9"/><path d="M657.2 208.0 C655.7 219.1 656.2 230.2 656.2 235.6 Q655.7 247.4 644.2 252.4" fill="none" stroke="#b01c14" stroke-width="1.02"/>
<path d="M670.7 208.6 C669.2 219.7 669.7 230.7 669.7 236.0 Q669.2 247.8 657.7 252.8" fill="none" stroke="#ea7868" stroke-width="2.9"/><path d="M670.7 208.6 C669.2 219.7 669.7 230.7 669.7 236.0 Q669.2 247.8 657.7 252.8" fill="none" stroke="#b01c14" stroke-width="1.02"/>
<path d="M683.2 209.2 C681.7 220.2 682.2 231.2 682.2 236.5 Q681.7 248.2 670.2 253.2" fill="none" stroke="#ea7868" stroke-width="2.9"/><path d="M683.2 209.2 C681.7 220.2 682.2 231.2 682.2 236.5 Q681.7 248.2 670.2 253.2" fill="none" stroke="#b01c14" stroke-width="1.02"/>
<path d="M696.6 209.8 C695.1 220.8 695.6 231.7 695.6 237.0 Q695.1 248.6 683.6 253.6" fill="none" stroke="#ea7868" stroke-width="2.9"/><path d="M696.6 209.8 C695.1 220.8 695.6 231.7 695.6 237.0 Q695.1 248.6 683.6 253.6" fill="none" stroke="#b01c14" stroke-width="1.02"/>
<path d="M713.0 211.3 L713.0 237.9 Q713.0 250.2 710.0 254.2" fill="none" stroke="#f8a090" stroke-width="2.1"/><path d="M713.0 211.3 L713.0 237.9 Q713.0 250.2 710.0 254.2" fill="none" stroke="#f02a16" stroke-width="0.54"/>
<path d="M719.0 212.6 L719.0 238.5 Q719.0 250.5 716.0 254.5" fill="none" stroke="#f8a090" stroke-width="2.1"/><path d="M719.0 212.6 L719.0 238.5 Q719.0 250.5 716.0 254.5" fill="none" stroke="#f02a16" stroke-width="0.54"/>
<path d="M726.0 214.0 L726.0 239.3 Q726.0 250.8 723.0 254.8" fill="none" stroke="#f8a090" stroke-width="2.1"/><path d="M726.0 214.0 L726.0 239.3 Q726.0 250.8 723.0 254.8" fill="none" stroke="#f02a16" stroke-width="0.54"/>
<path d="M732.0 215.2 L732.0 239.9 Q732.0 251.0 729.0 255.0" fill="none" stroke="#f8a090" stroke-width="2.1"/><path d="M732.0 215.2 L732.0 239.9 Q732.0 251.0 729.0 255.0" fill="none" stroke="#f02a16" stroke-width="0.54"/>
<path d="M738.0 216.4 L738.0 240.5 Q738.0 251.3 735.0 255.3" fill="none" stroke="#f8a090" stroke-width="2.1"/><path d="M738.0 216.4 L738.0 240.5 Q738.0 251.3 735.0 255.3" fill="none" stroke="#f02a16" stroke-width="0.54"/>
<path d="M743.0 217.5 L743.0 241.0 Q743.0 251.5 740.0 255.5" fill="none" stroke="#f8a090" stroke-width="2.1"/><path d="M743.0 217.5 L743.0 241.0 Q743.0 251.5 740.0 255.5" fill="none" stroke="#f02a16" stroke-width="0.54"/>
<path d="M747.0 218.3 L747.0 241.4 Q747.0 251.6 744.0 255.6" fill="none" stroke="#f8a090" stroke-width="2.1"/><path d="M747.0 218.3 L747.0 241.4 Q747.0 251.6 744.0 255.6" fill="none" stroke="#f02a16" stroke-width="0.54"/>
<path d="M751.0 219.1 L751.0 241.9 Q751.0 251.8 748.0 255.8" fill="none" stroke="#f8a090" stroke-width="2.1"/><path d="M751.0 219.1 L751.0 241.9 Q751.0 251.8 748.0 255.8" fill="none" stroke="#f02a16" stroke-width="0.54"/>
<path d="M755.0 219.9 L755.0 242.3 Q755.0 252.0 752.0 256.0" fill="none" stroke="#f8a090" stroke-width="2.1"/><path d="M755.0 219.9 L755.0 242.3 Q755.0 252.0 752.0 256.0" fill="none" stroke="#f02a16" stroke-width="0.54"/>
<path d="M759.0 220.7 L759.0 242.7 Q759.0 252.2 756.0 256.2" fill="none" stroke="#f8a090" stroke-width="2.1"/><path d="M759.0 220.7 L759.0 242.7 Q759.0 252.2 756.0 256.2" fill="none" stroke="#f02a16" stroke-width="0.54"/>
<path d="M764.0 221.8 L764.0 243.2 Q764.0 252.4 761.0 256.4" fill="none" stroke="#f8a090" stroke-width="2.1"/><path d="M764.0 221.8 L764.0 243.2 Q764.0 252.4 761.0 256.4" fill="none" stroke="#f02a16" stroke-width="0.54"/>
<path d="M399 245 L548 249.2 L702 254.3" stroke="#4a4040" stroke-width="1.1" fill="none" opacity="0.75"/>
<path d="M418 200 L548 203.2" stroke="#e07060" stroke-width="0.8" fill="none"/>
<path d="M398 243 V224" stroke="#2030d0" stroke-width="1.4"/><path d="M396 226 L398 221 L400 226Z" fill="#2030d0"/>
<path d="M398 244 H420" stroke="#e03020" stroke-width="1.4"/><path d="M398 243 L405 237" stroke="#30c040" stroke-width="1.4"/>
<text x="676" y="243" font-family="Liberation Sans" font-weight="bold" font-size="23" fill="#7a0806" textLength="166" lengthAdjust="spacingAndGlyphs">CrkDongle.com</text>
<path d="M335.5 425.5 L333 408 L345.5 421 Z" fill="#70c050" opacity="0.8"/>
<path d="M335.5 425.5 L333 408 L345.5 421" stroke="#1a1aa0" stroke-width="1.8" fill="none"/>
<path d="M335.5 425.5 H354" stroke="#e02020" stroke-width="1.5"/>
<path d="M331 404 L335 400" stroke="#333" stroke-width="1"/><path d="M356 428 L361 423 M356 423 L361 428" stroke="#555" stroke-width="0.9"/>
<path d="M744.5 376 V370 H750 M763.5 370 H769 V376 M744.5 387 V393 H750 M763.5 393 H769 V387" stroke="#2a2420" stroke-width="1.3" fill="none"/>
<path d="M736 387.5 Q745 370 759 375.5 Q749 377.5 736 387.5Z" fill="#1a1410" stroke="#1a1410" stroke-width="1"/>
<path d="M757.5 376.5 L771 380.5 L779 385 L768.5 385.5 Z" fill="#efe6dc" stroke="#1a1410" stroke-width="1.2"/>
<text x="695" y="410" font-family="Liberation Sans" font-weight="bold" font-size="11" fill="#2a221c" textLength="122" lengthAdjust="spacingAndGlyphs">FRIENDSHIP SYSTEMS</text>
<path d="M695 417.5 H817" stroke="#2a221c" stroke-width="1.4"/>
<text x="719" y="432.3" font-family="Liberation Sans" font-weight="bold" font-size="11" fill="#1e1812" textLength="75" lengthAdjust="spacingAndGlyphs">A GL company</text>
</svg>
</body></html>
